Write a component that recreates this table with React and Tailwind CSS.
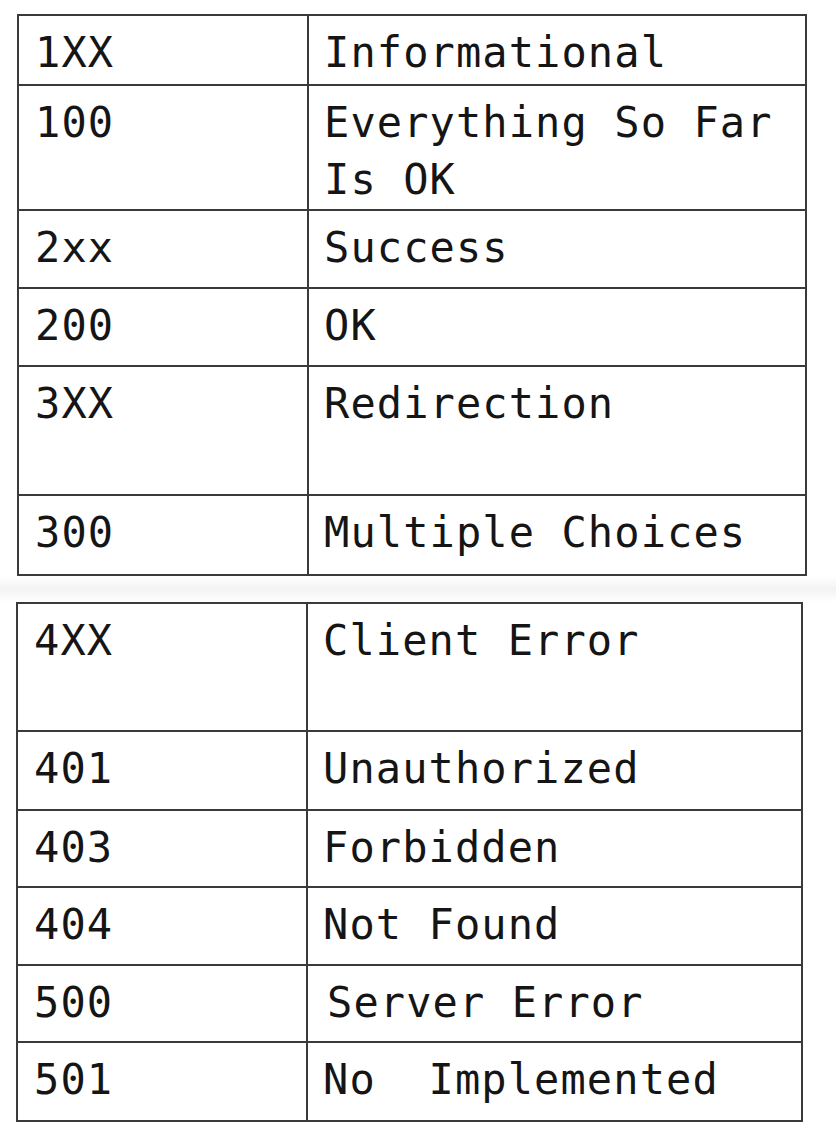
import React from 'react'

const top = [
  { code: '1XX', label: 'Informational', h: 'h-[70px]' },
  { code: '100', label: 'Everything So Far Is OK', h: 'h-[125px]' },
  { code: '2xx', label: 'Success', h: 'h-[78px]' },
  { code: '200', label: 'OK', h: 'h-[78px]' },
  { code: '3XX', label: 'Redirection', h: 'h-[129px]' },
  { code: '300', label: 'Multiple Choices', h: 'h-[78px]' },
]

const bottom = [
  { code: '4XX', label: 'Client Error', h: 'h-[128px]' },
  { code: '401', label: 'Unauthorized', h: 'h-[79px]' },
  { code: '403', label: 'Forbidden', h: 'h-[77px]' },
  { code: '404', label: 'Not Found', h: 'h-[78px]' },
  { code: '500', label: 'Server Error', h: 'h-[77px]', shift: true },
  { code: '501', label: 'No\u00a0\u00a0Implemented', h: 'h-[77px]' },
]

function StatusTable({ rows, className }) {
  return (
    <div className={`border-2 border-[#3a3a3a] ${className}`}>
      {rows.map((row, i) => (
        <div
          key={row.code}
          className={`flex ${row.h} ${i < rows.length - 1 ? 'border-b-2 border-[#3a3a3a]' : ''}`}
        >
          <div className="w-[290px] shrink-0 border-r-2 border-[#3a3a3a] pl-[16px] pt-[8px]">
            {row.code}
          </div>
          <div className={`flex-1 pt-[8px] pr-2 ${row.shift ? 'pl-[19px]' : 'pl-[15px]'}`}>
            {row.label}
          </div>
        </div>
      ))}
    </div>
  )
}

export default function App() {
  return (
    <div className="w-[836px] h-[1142px] bg-white pt-[14px] text-[#151515] text-[42px] leading-[57px] tracking-[1.1px] font-['DejaVu_Sans_Mono',monospace]">
      <StatusTable rows={top} className="ml-[17px] w-[790px]" />
      <div className="h-[26px] bg-gradient-to-b from-white via-[#f3f3f3] to-white" />
      <StatusTable rows={bottom} className="ml-[16px] w-[787px]" />
    </div>
  )
}
